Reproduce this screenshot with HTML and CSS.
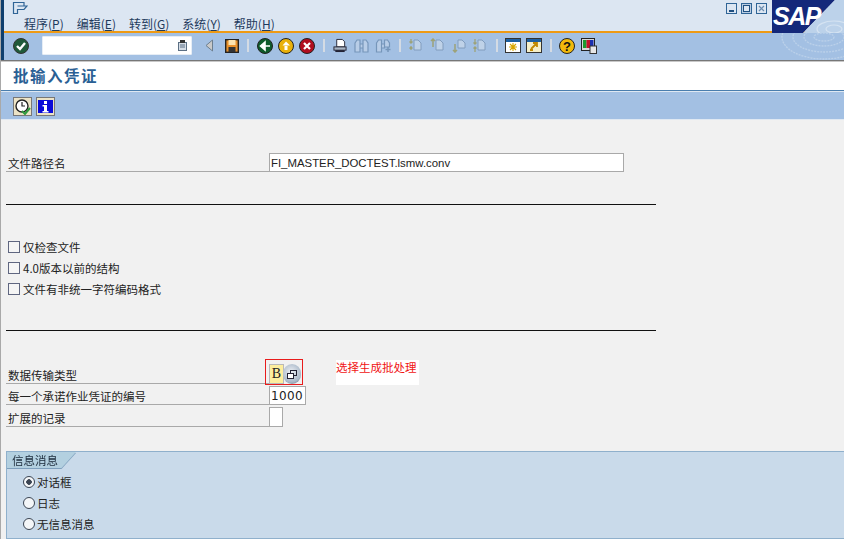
FILE: index.html
```html
<!DOCTYPE html>
<html lang="zh">
<head>
<meta charset="utf-8">
<title>批输入凭证</title>
<link rel="stylesheet" href="styles.css">
</head>
<body>
<div class="screen">
  <header class="chrome">
    <div class="titlebar">
      <div class="menuarea">
        <svg class="sysicon" width="16" height="14" viewBox="0 0 16 14"><path d="M1.500 1.500H12V5H15L12 8.500H5.500V12.500H1.500Z M5.500 5H12" fill="none" stroke="#2f6496" stroke-width="1.200"/></svg>
        <nav class="menu">
          <span>程序(<u>P</u>)</span><span>编辑(<u>E</u>)</span><span>转到(<u>G</u>)</span><span>系统(<u>Y</u>)</span><span>帮助(<u>H</u>)</span>
        </nav>
      </div>
      <div class="winbtns">
        <svg width="11" height="11" viewBox="0 0 11 11"><rect x=".5" y=".5" width="10" height="10" fill="#dce6f2" stroke="#2f6496"/><rect x="3" y="7" width="5" height="2" fill="#1f4f80"/></svg>
        <svg width="11" height="11" viewBox="0 0 11 11"><rect x=".5" y=".5" width="10" height="10" fill="#b9cde3" stroke="#2f6496"/><rect x="2.500" y="2.500" width="6" height="6" fill="#dce6f2" stroke="#1f4f80"/></svg>
        <svg width="11" height="11" viewBox="0 0 11 11"><rect x=".5" y=".5" width="10" height="10" fill="#dce6f2" stroke="#2f6496"/><path d="M3 3L8 8M8 3L3 8" stroke="#6b8cb0" stroke-width="1.200"/></svg>
      </div>
    </div>
    <div class="toolbar">
      <svg class="waves" width="72" height="27" viewBox="0 0 72 27"><g fill="none" stroke="#c3d6ec" stroke-width="1.300" stroke-dasharray="2 1" opacity=".75"><ellipse cx="52" cy="4" rx="10" ry="4"/><ellipse cx="52" cy="4" rx="20" ry="9"/><ellipse cx="52" cy="4" rx="31" ry="15"/><ellipse cx="52" cy="4" rx="42" ry="22"/></g></svg>
      <svg class="ti first" width="16" height="16" viewBox="0 0 16 16"><circle cx="8" cy="8" r="7.500" fill="#1f5a3a" stroke="#333"/><path d="M4 8l3 3 5-6" fill="none" stroke="#fff" stroke-width="2.400"/></svg>
      <div class="cmd"><svg width="9" height="11" viewBox="0 0 9 11"><rect x=".5" y="2.500" width="8" height="8" fill="#d5dde6" stroke="#5b6f84"/><rect x="2" y="0" width="5" height="3" fill="#333"/><path d="M2 5h5M2 7h5" stroke="#5b6f84"/></svg></div>
      <svg class="ti back" width="9" height="13" viewBox="0 0 9 13"><path d="M7.500 1v11L1 6.500Z" fill="#c9c9c9" stroke="#6d7f8f"/></svg>
      <svg class="ti save" width="14" height="14" viewBox="0 0 14 14"><rect x=".7" y=".7" width="12.600" height="12.600" fill="#e8912c" stroke="#222" stroke-width="1.400"/><rect x="3.500" y="1" width="7" height="5" fill="#fbe3b0"/><rect x="3.500" y="8" width="7" height="5" fill="#333"/></svg>
      <i class="sep"></i>
      <svg class="ti" width="16" height="16" viewBox="0 0 16 16"><circle cx="8" cy="8" r="7.500" fill="#0d5a2a" stroke="#222"/><path d="M13 8H7M8 4L3.500 8 8 12Z" fill="#fff" stroke="#fff" stroke-width="1.600"/></svg>
      <svg class="ti m5" width="16" height="16" viewBox="0 0 16 16"><circle cx="8" cy="8" r="7.500" fill="#e9b10b" stroke="#222"/><path d="M8 3.500L4.500 7.500H12Z M6.500 8h3v4h-3Z" fill="#fff"/></svg>
      <svg class="ti m5" width="16" height="16" viewBox="0 0 16 16"><circle cx="8" cy="8" r="7.500" fill="#b00d1e" stroke="#222"/><path d="M5 5l6 6M11 5l-6 6" stroke="#fff" stroke-width="2.200"/></svg>
      <i class="sep"></i>
      <svg class="ti" width="14" height="15" viewBox="0 0 15 15"><path d="M4 1H10L12.500 3.500V9H4Z" fill="#fff" stroke="#223"/><rect x="1" y="9" width="13" height="3.500" fill="#a9b5c4" stroke="#223"/><rect x="2.500" y="12.500" width="10" height="2" fill="#223"/></svg>
      <svg class="ti m7 dim" width="15" height="14" viewBox="0 0 15 14"><path d="M1 4L3 1H6V13H1ZM9 1H12L14 4V13H9ZM6 5H9V9H6Z" fill="#bcd0e8" stroke="#6f8fb4" stroke-width="1.200"/></svg>
      <svg class="ti m6 dim" width="17" height="14" viewBox="0 0 16 14"><path d="M1 4L3 1H6V13H1ZM9 1H12L14 4V8H9ZM6 5H9V9H6Z" fill="#bcd0e8" stroke="#6f8fb4" stroke-width="1.200"/><path d="M12.500 8v5M10 10.500h5" stroke="#6f8fb4" stroke-width="1.500"/></svg>
      <i class="sep s7"></i>
      <svg class="ti dim" width="15" height="15" viewBox="0 0 15 15"><path d="M6 2H10L13 5V12H6Z" fill="#c5d6ea" stroke="#7d98b8"/><path d="M3 1v4M1.500 3.500L3 5l1.500-1.500M3 8v4M1.500 10.500L3 9l1.500 1.500" stroke="#9c9d66" fill="none" stroke-width="1.300"/></svg>
      <svg class="ti m7 dim" width="15" height="15" viewBox="0 0 15 15"><path d="M6 2H10L13 5V12H6Z" fill="#c5d6ea" stroke="#7d98b8"/><path d="M3 9V1M1 3L3 1l2 2" stroke="#9c9d66" fill="none" stroke-width="1.500"/></svg>
      <svg class="ti m7 dim" width="15" height="15" viewBox="0 0 15 15"><path d="M6 2H10L13 5V10H6Z" fill="#c5d6ea" stroke="#7d98b8"/><path d="M3 6V14M1 12l2 2 2-2" stroke="#9c9d66" fill="none" stroke-width="1.500"/></svg>
      <svg class="ti m5 dim" width="15" height="15" viewBox="0 0 15 15"><path d="M6 2H10L13 5V12H6Z" fill="#c5d6ea" stroke="#7d98b8"/><path d="M3 1v5M1.500 4.500L3 6l1.500-1.500M3 9v5M1.500 10.500L3 9l1.500 1.500" stroke="#9c9d66" fill="none" stroke-width="1.300"/></svg>
      <i class="sep s97"></i>
      <svg class="ti" width="16" height="15" viewBox="0 0 16 15"><rect x=".5" y=".5" width="15" height="14" fill="#fff" stroke="#333"/><rect x="1" y="1" width="14" height="3" fill="#1d5fa0"/><path d="M8 5v8M4 9h8M5 6l6 6M11 6l-6 6" stroke="#d8a600" stroke-width="1.100"/></svg>
      <svg class="ti m5" width="16" height="15" viewBox="0 0 16 15"><rect x=".5" y=".5" width="15" height="14" fill="#f6efc8" stroke="#333"/><rect x="1" y="1" width="14" height="3" fill="#1d5fa0"/><path d="M4 12h3M5 11L11 5M7 5h4v4" stroke="#c28a00" fill="none" stroke-width="1.800"/></svg>
      <i class="sep s87"></i>
      <svg class="ti" width="16" height="16" viewBox="0 0 16 16"><circle cx="8" cy="8" r="7.500" fill="#f2b90c" stroke="#222"/><text x="8" y="12.500" class="helpq">?</text></svg>
      <svg class="ti m6" width="16" height="16" viewBox="0 0 16 16"><rect x=".5" y=".5" width="13" height="12" fill="#d9d9d9" stroke="#222"/><rect x="2" y="2" width="3.500" height="8" fill="#1a9a2f"/><rect x="5.500" y="2" width="3.500" height="8" fill="#c4122a"/><rect x="9" y="2" width="3.500" height="8" fill="#1a2fb0"/><rect x="9" y="8" width="6.500" height="7.500" fill="#e7e7e7" stroke="#333"/></svg>
    </div>
    <div class="saplogo">
      <svg width="72" height="33" viewBox="0 0 72 33"><path d="M0 0H63L31 33H0Z" fill="#14287a"/><path d="M72 0H63L31 33H72Z" fill="#bcd2ea"/><g fill="none" stroke="#d5e3f2" stroke-width="1.200"><ellipse cx="62" cy="29" rx="8" ry="4"/><ellipse cx="62" cy="29" rx="17" ry="8"/></g><text x="1" y="25" class="saptext">SAP</text></svg>
    </div>
  </header>

  <div class="tline"></div>
  <h1 class="apptitle">批输入凭证</h1>
  <div class="apptools">
    <button class="appbtn"><svg width="16" height="16" viewBox="0 0 16 16"><circle cx="7" cy="7" r="6" fill="#fff" stroke="#222" stroke-width="1.400"/><path d="M7 3v4h3" stroke="#222" fill="none" stroke-width="1.200"/><path d="M7 12l3 3 5-6" stroke="#2e9a3e" fill="none" stroke-width="2"/></svg></button>
    <button class="appbtn"><svg width="15" height="13" viewBox="0 0 15 13"><rect width="15" height="13" fill="#0a0ad8"/><rect x="6" y="1" width="3" height="3" fill="#fff"/><path d="M4.500 5H9v6h1.500v1.500h-6V11H6V6.500H4.500Z" fill="#fff"/></svg></button>
  </div>

  <main class="content">
    <div class="form">
      <div class="frow pathrow"><label>文件路径名</label><div class="input pathinput">FI_MASTER_DOCTEST.lsmw.conv</div></div>
      <hr class="rule rule1">
      <div class="checks">
        <div class="check"><i class="box"></i><span>仅检查文件</span></div>
        <div class="check"><i class="box"></i><span>4.0版本以前的结构</span></div>
        <div class="check"><i class="box"></i><span>文件有非统一字符编码格式</span></div>
      </div>
      <hr class="rule rule2">
      <div class="frow tall"><label>数据传输类型</label>
        <div class="picker"><span class="pval">B</span><span class="pbtn"><svg width="10" height="9" viewBox="0 0 10 9"><rect x="3.500" y=".5" width="6" height="5" fill="none" stroke="#223"/><rect x=".5" y="3.500" width="6" height="5" fill="#fff" stroke="#223"/></svg></span></div>
        <div class="redbox"></div>
        <div class="note">选择生成批处理</div>
      </div>
      <div class="frow row21"><label>每一个承诺作业凭证的编号</label><div class="input numinput">1000</div></div>
      <div class="frow row22"><label>扩展的记录</label><div class="input flaginput"></div></div>
    </div>
    <section class="group">
      <div class="gtab"><div class="gtitle"><span>信息消息</span></div></div>
      <div class="radios">
        <div class="radio"><i class="dot on"></i><span>对话框</span></div>
        <div class="radio"><i class="dot"></i><span>日志</span></div>
        <div class="radio"><i class="dot"></i><span>无信息消息</span></div>
      </div>
    </section>
  </main>
</div>
</body>
</html>
```
FILE: styles.css
```css
* { box-sizing: border-box; }
html, body { margin: 0; padding: 0; }
body {
  width: 844px; height: 539px; overflow: hidden;
  font-family: "Noto Sans CJK SC", "Liberation Sans", sans-serif;
  font-size: 11.500px; color: #222;
  background: #f1f1f1;
}
.screen { position: relative; width: 844px; height: 539px; border-left: 1px solid #a9a9a9; overflow: hidden; }
.chrome { position: relative; margin-left: -1px; border-left: 4px solid #0f3f6e; }
.titlebar { position: relative; height: 33px; background: #dce6f2; border-bottom: 2px solid #ee9a14; display: flex; justify-content: space-between; }
.menuarea { padding: 1px 0 0 4px; }
.sysicon { display: block; margin-left: 4px; }
.menu { display: flex; gap: 13px; margin: 1px 0 0 16px; font-size: 12px; line-height: 15px; color: #1e3a5c; }
.menu span { white-space: nowrap; }
.winbtns { display: flex; gap: 4px; padding: 3px 0 0; margin-right: 77px; }
.winbtns svg { display: block; }
.toolbar { position: relative; height: 27px; background: #a3c0e3; display: flex; align-items: center; padding: 0 0 2px 9px; overflow: hidden; }
.ti { flex: none; display: block; position: relative; }
.m5 { margin-left: 5px; }
.m6 { margin-left: 6px; }
.m7 { margin-left: 7px; }
.ti.dim { opacity: .85; }
.cmd { width: 150px; height: 19px; margin-left: 13px; background: #fff; border: 1px solid #e6edf5; border-radius: 1px; display: flex; align-items: center; justify-content: flex-end; padding-right: 4px; position: relative; }
.back { margin-left: 13px; }
.save { margin-left: 11px; }
.sep { flex: none; width: 2px; height: 13px; margin: 0 8px; background: #d4dbe4; }
.s7 { margin: 0 7px; }
.s97 { margin: 0 7px 0 9px; }
.s87 { margin: 0 7px 0 8px; }
.helpq { font: bold 13px "Liberation Sans", sans-serif; text-anchor: middle; fill: #111; }
.waves { position: absolute; right: 0; top: 0; }
.saplogo { position: absolute; right: 0; top: 0; width: 72px; height: 33px; }
.saplogo svg { display: block; }
.saptext { font: italic bold 25px "Liberation Sans", sans-serif; fill: #fff; letter-spacing: -1.500px; }
.tline { height: 2px; background: linear-gradient(#777 0 1px, #c8c8c8 1px); }
.apptitle { margin: 0; height: 29px; background: #fff; border-bottom: 1px solid #4a7eae; padding-left: 12px; font-size: 15.500px; line-height: 26px; font-weight: 700; color: #2a5f94; letter-spacing: 1.500px; }
.apptools { height: 29px; background: #a3c0e3; border-top: 1px solid #dfe8f2; border-bottom: 1px solid #dfe8f2; display: flex; gap: 4px; padding: 5px 0 0 12px; }
.appbtn { width: 19px; height: 19px; padding: 0; border: 1px solid #777; background: #ece3c6; display: flex; align-items: center; justify-content: center; }
.content { display: flex; flex-direction: column; padding-top: 33px; }
.form { margin-left: 5px; width: 650px; }
.frow { position: relative; display: flex; align-items: flex-end; }
.frow label { flex: none; width: 263px; border-bottom: 1px solid #a9a9a9; padding: 1px 0 0 2px; line-height: 16px; color: #222; }
.pathrow { height: 19px; }
.row21 { height: 21px; }
.row22 { height: 22px; }
.input { background: #fff; border: 1px solid #a9a9a9; height: 19px; padding-left: 1px; line-height: 18px; }
.pathinput { width: 355px; font-family: "Liberation Sans", sans-serif; font-size: 11.400px; }
.numinput { width: 37px; font-family: "DejaVu Sans", sans-serif; font-size: 12px; letter-spacing: .4px; line-height: 19px; }
.flaginput { width: 14px; height: 20px; }
.rule { margin: 0; border: 0; height: 1px; background: #111; }
.rule1 { margin-top: 32px; }
.rule2 { margin-top: 35px; }
.checks { display: flex; flex-direction: column; gap: 8px; margin-top: 35px; padding-left: 2px; }
.check { display: flex; align-items: center; gap: 3px; height: 13px; }
.box { display: block; flex: none; width: 12px; height: 12px; background: #f5f5f5; border: 1px solid #5f6680; }
.tall { height: 53px; }
.picker { display: flex; height: 20px; }
.pval { width: 15px; background: #fdee9e; border: 1px solid #b9b9b9; font: 14px/18px "Liberation Serif", serif; text-align: center; color: #222; }
.pbtn { width: 18px; height: 20px; border-radius: 9px; background: radial-gradient(circle at 45% 40%, #eef1f5, #a9b8c8 65%, #555d68); display: flex; align-items: center; justify-content: center; margin-left: -1px; }
.pbtn svg { display: block; }
.redbox { position: absolute; left: 259px; top: 28px; width: 38px; height: 26px; border: 1px solid #e81c1c; }
.note { position: absolute; left: 330px; top: 29px; width: 83px; height: 25px; background: #fff; color: #f01414; line-height: 14px; white-space: nowrap; }
.group { margin: 24px 0 0 5px; height: 88px; background: #c9daea; border: 1px solid #8fb0cc; border-right: 0; position: relative; }
.gtab { width: 70px; filter: drop-shadow(0 1px 0 #7fa0bd); }
.gtitle { height: 16px; width: 69px; background: #b3d0e0; clip-path: polygon(0 0, 100% 0, 79% 100%, 0 100%); line-height: 16px; padding-left: 5px; color: #1b2a3a; }
.radios { display: flex; flex-direction: column; gap: 8px; padding: 7px 0 0 16px; }
.radio { display: flex; align-items: center; gap: 2px; height: 13px; }
.dot { display: block; flex: none; width: 12px; height: 12px; border-radius: 50%; background: #f4f6f8; border: 1.500px solid #3a4452; }
.dot.on { background: radial-gradient(circle, #3a4452 0 2.500px, #f4f6f8 3px); }
```
